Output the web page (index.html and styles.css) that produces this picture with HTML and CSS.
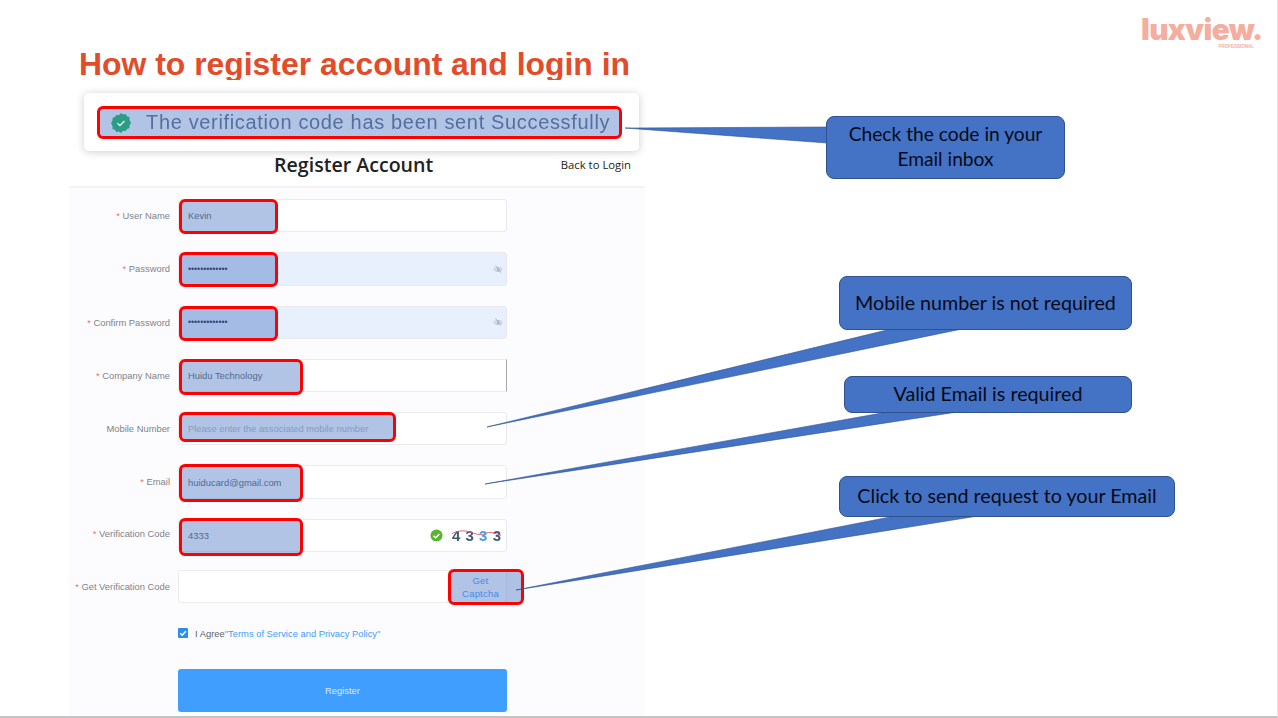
FILE: index.html
```html
<!DOCTYPE html>
<html lang="en">
<head>
  <meta charset="UTF-8"/>
  <meta name="viewport" content="width=device-width,initial-scale=1.0"/>
  <title>How to register account and login in</title>
  <link rel="stylesheet" href="styles.css">
</head>
<body>

<div class="slide">
  <h1 class="slide-title">How to register account and login in</h1>

  <div class="logo">
    <span class="logo-name">luxview.</span>
    <span class="logo-sub">PROFESSIONAL</span>
  </div>

  <section class="panel">
    <header class="panel-head">
      <h2>Register Account</h2>
      <a class="back-link">Back to Login</a>
    </header>

    <div class="toast">
      <div class="toast-text">
        <svg class="toast-icon" viewBox="0 0 22 22">
          <path fill="#2a9d84" d="M11 0l2.4 1.6 2.8-.5 1.5 2.4 2.7.9-.1 2.9L22 11l-1.700 2.700.100 2.900-2.700.9-1.500 2.400-2.800-.5L11 22l-2.400-1.600-2.800.5-1.500-2.400-2.700-.9.100-2.900L0 11l1.700-2.700-.100-2.900 2.700-.9 1.500-2.400 2.800.5z"/>
          <path fill="none" stroke="#dff3ee" stroke-width="1.500" d="M7 11.200l2.800 2.600 5-5"/>
        </svg>
        <span>The verification code has been sent Successfully</span>
      </div>
      <div class="mark mark-toast"></div>
    </div>

    <form class="reg-form">
      <div class="row">
        <label><em>*</em> User Name</label>
        <div class="field">
          <span class="value">Kevin</span>
          <div class="mark mark-sm"></div>
        </div>
      </div>

      <div class="row">
        <label><em>*</em> Password</label>
        <div class="field field-filled">
          <span class="value dots">•••••••••••••</span>
          <svg class="eye" viewBox="0 0 12 12">
            <path fill="none" stroke="#aeb6c6" stroke-width="1.100" d="M1 6.500c2.500-3 7.500-3 10 0-2.500 3-7.500 3-10 0zM3 1.500l6.500 9"/>
            <circle cx="6.200" cy="6.500" r="1.800" fill="#aeb6c6"/>
          </svg>
          <div class="mark mark-sm"></div>
        </div>
      </div>

      <div class="row">
        <label><em>*</em> Confirm Password</label>
        <div class="field field-filled">
          <span class="value dots">•••••••••••••</span>
          <svg class="eye" viewBox="0 0 12 12">
            <path fill="none" stroke="#aeb6c6" stroke-width="1.100" d="M1 6.500c2.500-3 7.500-3 10 0-2.500 3-7.500 3-10 0zM3 1.500l6.500 9"/>
            <circle cx="6.200" cy="6.500" r="1.800" fill="#aeb6c6"/>
          </svg>
          <div class="mark mark-sm"></div>
        </div>
      </div>

      <div class="row">
        <label><em>*</em> Company Name</label>
        <div class="field field-edge">
          <span class="value">Huidu Technology</span>
          <div class="mark mark-md"></div>
        </div>
      </div>

      <div class="row">
        <label>Mobile Number</label>
        <div class="field">
          <span class="value placeholder">Please enter the associated mobile number</span>
          <div class="mark mark-lg"></div>
        </div>
      </div>

      <div class="row">
        <label><em>*</em> Email</label>
        <div class="field">
          <span class="value">huiducard@gmail.com</span>
          <div class="mark mark-md mark-tall"></div>
        </div>
      </div>

      <div class="row">
        <label class="label-up"><em>*</em> Verification Code</label>
        <div class="field">
          <span class="value">4333</span>
          <svg class="ok" viewBox="0 0 14 14">
            <circle cx="7" cy="7" r="6.500" fill="#56b62d"/>
            <path fill="none" stroke="#fff" stroke-width="1.600" d="M3.800 7.200l2.300 2.200 4-4"/>
          </svg>
          <div class="captcha">
            <span>4</span><span>3</span><span class="captcha-blue">3</span><span>3</span>
            <svg class="captcha-line" viewBox="0 0 50 14">
              <path fill="none" stroke="#e2606a" stroke-width="1" d="M0 5c8-4 14-3 20-1s10 3 14 1 9-1 16 2"/>
            </svg>
          </div>
          <div class="mark mark-md mark-tall"></div>
        </div>
      </div>

      <div class="row row-tight">
        <label><em>*</em> Get Verification Code</label>
        <div class="field">
          <button type="button" class="get-code">Get Captcha</button>
          <div class="mark mark-btn"></div>
        </div>
      </div>

      <div class="agree">
        <span class="check">
          <svg viewBox="0 0 10 10"><path fill="none" stroke="#fff" stroke-width="1.500" d="M2.200 5.200l2 2 3.600-4"/></svg>
        </span>
        <span>I Agree<a>"Terms of Service and Privacy Policy"</a></span>
      </div>

      <button type="button" class="submit">Register</button>
    </form>
  </section>

  <svg class="pointers" viewBox="0 0 1278 718">
    <polygon points="625,128 827,127 827,143"/>
    <polygon points="487,427 891,329 962,329"/>
    <polygon points="485,484 893,411 964,411"/>
    <polygon points="516,590 895,516 978,516"/>
  </svg>

  <div class="callout callout-code">Check the code in your<br>Email inbox</div>
  <div class="callout callout-mobile">Mobile number is not required</div>
  <div class="callout callout-email">Valid Email is required</div>
  <div class="callout callout-send">Click to send request to your Email</div>
</div>

</body>
</html>
```

FILE: styles.css
```css
* {
  margin: 0;
  padding: 0;
  box-sizing: border-box;
}

body {
  font-family: "Liberation Sans", Arial, sans-serif;
  background: #fff;
  overflow: hidden;
}

.slide {
  position: relative;
  width: 1278px;
  height: 718px;
  overflow: hidden;
  border-right: 1px solid #e4e4e4;
  border-bottom: 2px solid #c4c4c4;
}

.slide-title {
  height: 80px;
  padding: 46px 0 0 79px;
  font-size: 31.900px;
  line-height: 36px;
  font-weight: 700;
  color: #e34c2a;
}

/* logo */
.logo {
  position: absolute;
  top: 13px;
  left: 1141px;
  width: 122px;
  color: #f4ad9e;
}

.logo-name {
  display: block;
  font-family: Inter, "Liberation Sans", sans-serif;
  font-size: 29.700px;
  line-height: 32px;
  font-weight: 900;
  letter-spacing: -0.6px;
}

.logo-sub {
  display: block;
  margin-right: 9px;
  text-align: right;
  font-size: 4.500px;
  line-height: 4px;
  font-weight: 700;
}

/* form panel */
.panel {
  position: relative;
  width: 576px;
  height: 636px;
  margin-left: 69px;
  background: #fcfcfe;
  filter: blur(0.3px);
}

.panel-head {
  position: relative;
  height: 108px;
  padding-top: 72px;
  background: #fff;
  border-bottom: 2px solid #f3f3f3;
  font-family: "Open Sans", sans-serif;
}

.panel-head h2 {
  margin-left: 205px;
  font-size: 19.600px;
  line-height: 26px;
  font-weight: 600;
  color: #222;
}

.back-link {
  position: absolute;
  top: 76px;
  right: 14px;
  font-size: 11.300px;
  line-height: 18px;
  color: #222;
}

.toast {
  position: absolute;
  top: 13px;
  left: 15px;
  width: 555px;
  height: 58px;
  padding: 13px 17px;
  background: #fff;
  border-radius: 5px;
  box-shadow: 0 1px 8px rgba(0, 0, 0, 0.2);
}

.toast-text {
  display: flex;
  align-items: center;
  height: 33px;
  padding-left: 10px;
  font-size: 20px;
  letter-spacing: 0.66px;
  color: #606c84;
  white-space: nowrap;
}

.toast-icon {
  position: relative;
  z-index: 1;
  width: 20px;
  height: 20px;
  margin-right: 15px;
}

.reg-form {
  padding-top: 11px;
}

.row {
  display: grid;
  grid-template-columns: 101px 329px;
  column-gap: 8px;
  height: 33.300px;
  margin-bottom: 20px;
}

.row-tight {
  margin-top: -2px;
  margin-bottom: 0;
}

.row label {
  text-align: right;
  line-height: 33px;
  font-size: 9.400px;
  color: #808388;
  white-space: nowrap;
}

.row .label-up {
  margin-top: -2px;
}

.row em {
  font-style: normal;
  color: #f56c6c;
}

.field {
  position: relative;
  display: flex;
  align-items: center;
  height: 100%;
  padding: 0 9px;
  background: #fff;
  border: 1px solid #e8eaee;
  border-radius: 3px;
}

.field-filled {
  background: #e8f0fe;
}

.field-edge {
  border-right: 1px solid #a8a8a8;
  border-radius: 3px 0 0 3px;
}

.value {
  font-size: 9.400px;
  color: #606266;
  white-space: nowrap;
}

.dots {
  font-size: 8.700px;
  color: #222a3a;
}

.placeholder {
  color: #b4b8c0;
}

.eye {
  width: 10px;
  height: 10px;
  margin-left: auto;
  margin-right: -6px;
}

.ok {
  width: 13px;
  height: 13px;
  margin-left: auto;
  margin-right: 9px;
}

.captcha {
  position: relative;
  display: flex;
  justify-content: space-between;
  width: 49px;
  margin-right: -4px;
  font-size: 15px;
  line-height: 15px;
  font-weight: 700;
  color: #3f5674;
  filter: blur(0.5px);
}

.captcha-blue {
  color: #3f9eee;
}

.captcha-line {
  position: absolute;
  top: 0;
  left: 0;
  width: 100%;
  height: 100%;
}

.get-code {
  width: 58px;
  height: 100%;
  margin-left: auto;
  margin-right: -9px;
  padding: 0 0 0 6px;
  background: none;
  border: none;
  border-left: 1px solid #e8eaee;
  font-family: inherit;
  font-size: 9.500px;
  line-height: 13px;
  color: #409eff;
  letter-spacing: 0.2px;
}

/* red highlight boxes drawn on top of the screenshot */
.mark {
  position: absolute;
  top: -1px;
  left: 0;
  height: 35px;
  background: rgba(68, 114, 196, 0.42);
  border: 3px solid #f00;
  border-radius: 6px;
}

.mark-sm {
  width: 99px;
}

.mark-md {
  width: 124px;
  height: 36px;
}

.mark-tall {
  top: -2px;
  height: 38px;
}

.mark-lg {
  width: 217px;
  height: 30px;
}

.mark-btn {
  top: -2px;
  left: 269px;
  width: 76px;
  height: 36px;
}

.mark-toast {
  top: 13px;
  left: 13px;
  width: 525px;
  height: 33px;
}

.agree {
  display: flex;
  align-items: center;
  gap: 7px;
  margin: 19px 0 0 109px;
  height: 22px;
  font-size: 9.400px;
  color: #606266;
}

.agree a {
  color: #409eff;
}

.check {
  display: flex;
  width: 10px;
  height: 10px;
  background: #2d8cf0;
  border-radius: 1px;
}

.submit {
  display: block;
  width: 329px;
  height: 43px;
  margin: 25px 0 0 109px;
  background: #409eff;
  border: none;
  border-radius: 3px;
  font-family: inherit;
  font-size: 9.400px;
  color: #d9ecff;
}

/* callouts */
.pointers {
  position: absolute;
  top: 0;
  left: 0;
  width: 1278px;
  height: 718px;
  fill: #4472c4;
  stroke: #2f528f;
  stroke-width: 0.6px;
}

.callout {
  position: absolute;
  display: flex;
  align-items: center;
  justify-content: center;
  padding-bottom: 2px;
  text-align: center;
  font-family: Lato, sans-serif;
  font-size: 19.700px;
  line-height: 25px;
  color: #060a18;
  background: #4472c4;
  border: 1px solid #2f528f;
  border-radius: 8px;
}

.callout-code {
  top: 116px;
  left: 826px;
  width: 239px;
  height: 63px;
  padding-bottom: 3px;
  font-size: 19.200px;
}

.callout-mobile {
  top: 276px;
  left: 839px;
  width: 293px;
  height: 54px;
}

.callout-email {
  top: 376px;
  left: 844px;
  width: 288px;
  height: 37px;
}

.callout-send {
  top: 476px;
  left: 839px;
  width: 336px;
  height: 41px;
}
```
